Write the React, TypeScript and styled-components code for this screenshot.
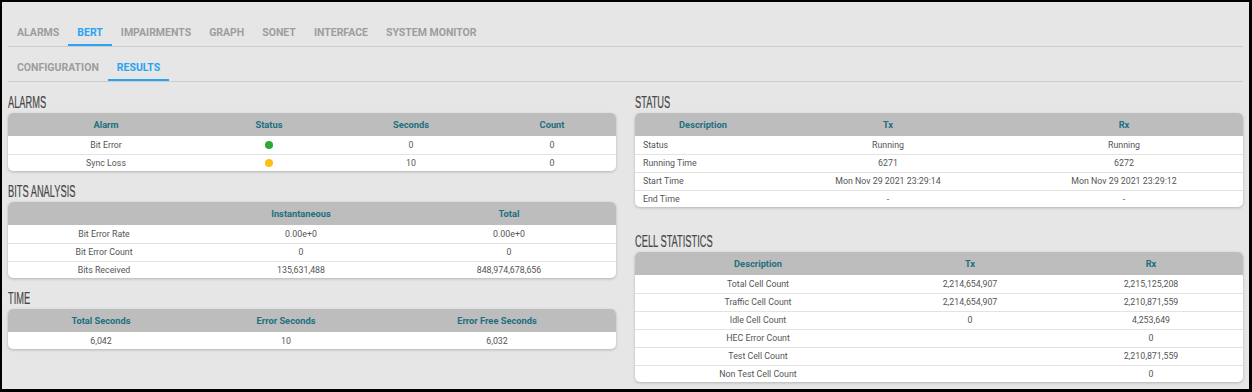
import React from "react";
import styled, { createGlobalStyle } from "styled-components";

const GlobalStyle = createGlobalStyle`
  html, body { margin: 0; padding: 0; background: #e6e6e6; }
  * { box-sizing: border-box; }
`;

const Frame = styled.div`
  width: 1252px;
  height: 392px;
  background: #e6e6e6;
  border: 2px solid #000;
  border-right-width: 3px;
  border-bottom-width: 3px;
  padding: 16px 6px 0 6px;
  font-family: Roboto, "Liberation Sans", sans-serif;
  overflow: hidden;
`;

const TabBar = styled.div<{ $top?: number }>`
  display: flex;
  border-bottom: 1px solid #cdcdcd;
  margin-top: ${(p) => p.$top ?? 0}px;
`;

const Tab = styled.div<{ $active?: boolean }>`
  height: 28px;
  line-height: 29px;
  padding: 0 9px;
  font-size: 10.5px;
  font-weight: 700;
  text-transform: uppercase;
  color: ${(p) => (p.$active ? "#2aa3f2" : "#9d9d9d")};
  box-shadow: ${(p) => (p.$active ? "inset 0 -2px 0 #2aa3f2" : "none")};
  white-space: nowrap;
`;

const Columns = styled.div`
  display: grid;
  grid-template-columns: 1fr 1fr;
  column-gap: 19px;
  align-items: start;
`;

const Column = styled.div`
  display: flex;
  flex-direction: column;
`;

const Section = styled.section<{ $extra?: number }>`
  margin-top: ${(p) => p.$extra ?? 0}px;
`;

const HeadingBar = styled.div`
  height: 31px;
  padding-top: 11px;
`;

const Heading = styled.h2`
  display: inline-block;
  margin: 0;
  font-family: "Liberation Sans", Arial, sans-serif;
  font-weight: 400;
  font-size: 16px;
  line-height: 16px;
  color: #474747;
  transform: scaleX(0.58);
  transform-origin: left center;
  white-space: nowrap;
  -webkit-text-stroke: 0.2px #474747;
`;

const Card = styled.div`
  background: #fff;
  border-radius: 5px;
  overflow: hidden;
  box-shadow: 0 1px 3px rgba(0, 0, 0, 0.22);
`;

const Table = styled.table`
  width: 100%;
  border-collapse: collapse;
  table-layout: fixed;
`;

const HeadCell = styled.th`
  height: 23px;
  padding: 0;
  background: #bdbdbd;
  color: #216f7f;
  font-size: 9.3px;
  font-weight: 700;
  text-align: center;
`;

const Row = styled.tr`
  border-bottom: 1px solid #e3e3e3;
  & > td { height: 18px; }
  &:last-child { border-bottom: none; }
  &:last-child > td { height: 17px; }
`;

const Cell = styled.td<{ $left?: boolean }>`
  padding: 0 ${(p) => (p.$left ? "8px" : "0")};
  font-size: 8.8px;
  color: #555;
  text-align: ${(p) => (p.$left ? "left" : "center")};
  white-space: nowrap;
`;

const Dot = styled.span<{ $color: string }>`
  display: inline-block;
  width: 8px;
  height: 8px;
  border-radius: 50%;
  background: ${(p) => p.$color};
  vertical-align: middle;
`;

type TableProps = {
  widths: string[];
  head: string[];
  rows: React.ReactNode[][];
  leftFirst?: boolean;
};

function DataTable({ widths, head, rows, leftFirst }: TableProps) {
  return (
    <Card>
      <Table>
        <colgroup>
          {widths.map((w, i) => (
            <col key={i} style={{ width: w }} />
          ))}
        </colgroup>
        <thead>
          <tr>
            {head.map((h, i) => (
              <HeadCell key={i}>{h}</HeadCell>
            ))}
          </tr>
        </thead>
        <tbody>
          {rows.map((r, i) => (
            <Row key={i}>
              {r.map((c, j) => (
                <Cell key={j} $left={leftFirst && j === 0}>
                  {c}
                </Cell>
              ))}
            </Row>
          ))}
        </tbody>
      </Table>
    </Card>
  );
}

function Titled({ title, children, extra }: { title: string; children: React.ReactNode; extra?: number }) {
  return (
    <Section $extra={extra}>
      <HeadingBar>
        <Heading>{title}</Heading>
      </HeadingBar>
      {children}
    </Section>
  );
}

const mainTabs = ["Alarms", "BERT", "Impairments", "Graph", "SONET", "Interface", "System Monitor"];

export default function App() {
  return (
    <>
      <GlobalStyle />
      <Frame>
        <TabBar>
          {mainTabs.map((t) => (
            <Tab key={t} $active={t === "BERT"}>
              {t}
            </Tab>
          ))}
        </TabBar>
        <TabBar $top={6}>
          <Tab>Configuration</Tab>
          <Tab $active>Results</Tab>
        </TabBar>
        <Columns>
          <Column>
            <Titled title="ALARMS">
              <DataTable
                widths={["196px", "130px", "154px", "auto"]}
                head={["Alarm", "Status", "Seconds", "Count"]}
                rows={[
                  ["Bit Error", <Dot $color="#2ea836" />, "0", "0"],
                  ["Sync Loss", <Dot $color="#fdbf17" />, "10", "0"],
                ]}
              />
            </Titled>
            <Titled title="BITS ANALYSIS">
              <DataTable
                widths={["192px", "202px", "auto"]}
                head={["", "Instantaneous", "Total"]}
                rows={[
                  ["Bit Error Rate", "0.00e+0", "0.00e+0"],
                  ["Bit Error Count", "0", "0"],
                  ["Bits Received", "135,631,488", "848,974,678,656"],
                ]}
              />
            </Titled>
            <Titled title="TIME">
              <DataTable
                widths={["186px", "184px", "auto"]}
                head={["Total Seconds", "Error Seconds", "Error Free Seconds"]}
                rows={[["6,042", "10", "6,032"]]}
              />
            </Titled>
          </Column>
          <Column>
            <Titled title="STATUS">
              <DataTable
                leftFirst
                widths={["136px", "234px", "auto"]}
                head={["Description", "Tx", "Rx"]}
                rows={[
                  ["Status", "Running", "Running"],
                  ["Running Time", "6271", "6272"],
                  ["Start Time", "Mon Nov 29 2021 23:29:14", "Mon Nov 29 2021 23:29:12"],
                  ["End Time", "-", "-"],
                ]}
              />
            </Titled>
            <Titled title="CELL STATISTICS" extra={14}>
              <DataTable
                widths={["246px", "178px", "auto"]}
                head={["Description", "Tx", "Rx"]}
                rows={[
                  ["Total Cell Count", "2,214,654,907", "2,215,125,208"],
                  ["Traffic Cell Count", "2,214,654,907", "2,210,871,559"],
                  ["Idle Cell Count", "0", "4,253,649"],
                  ["HEC Error Count", "", "0"],
                  ["Test Cell Count", "", "2,210,871,559"],
                  ["Non Test Cell Count", "", "0"],
                ]}
              />
            </Titled>
          </Column>
        </Columns>
      </Frame>
    </>
  );
}
